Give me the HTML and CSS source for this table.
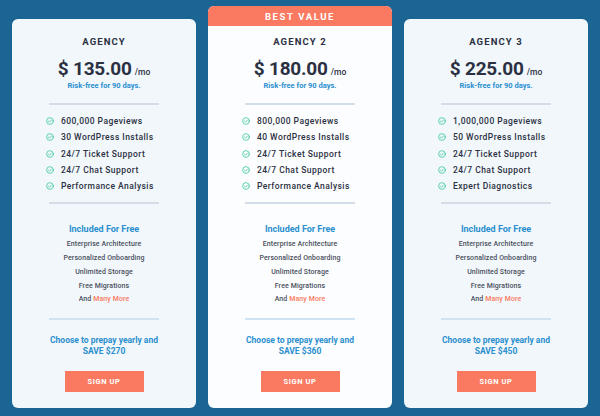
FILE: index.html
```html
<!DOCTYPE html>
<html lang="en">
  <head>
    <meta charset="UTF-8" />
    <title>Pricing</title>
    <link rel="stylesheet" href="styles.css">
  </head>
  <body>
    <div class="plans">
      <div class="card">
        <div class="cardBody">
          <div class="name">AGENCY</div>
          <div class="price">$ 135.00<span class="per">/mo</span></div>
          <div class="risk">Risk-free for 90 days.</div>
          <div class="line"></div>
          <ul class="features">
            <li><svg viewBox="0 0 10 10"><circle cx="5" cy="5" r="4.2"/><path d="M3 5.1l1.4 1.4 2.7-2.8"/></svg>600,000 Pageviews</li>
            <li><svg viewBox="0 0 10 10"><circle cx="5" cy="5" r="4.2"/><path d="M3 5.1l1.4 1.4 2.7-2.8"/></svg>30 WordPress Installs</li>
            <li><svg viewBox="0 0 10 10"><circle cx="5" cy="5" r="4.2"/><path d="M3 5.1l1.4 1.4 2.7-2.8"/></svg>24/7 Ticket Support</li>
            <li><svg viewBox="0 0 10 10"><circle cx="5" cy="5" r="4.2"/><path d="M3 5.1l1.4 1.4 2.7-2.8"/></svg>24/7 Chat Support</li>
            <li><svg viewBox="0 0 10 10"><circle cx="5" cy="5" r="4.2"/><path d="M3 5.1l1.4 1.4 2.7-2.8"/></svg>Performance Analysis</li>
          </ul>
          <div class="line"></div>
          <div class="freeTitle">Included For Free</div>
          <ul class="free">
            <li>Enterprise Architecture</li>
            <li>Personalized Onboarding</li>
            <li>Unlimited Storage</li>
            <li>Free Migrations</li>
            <li>And <span class="more">Many More</span></li>
          </ul>
          <div class="line blue"></div>
          <div class="prepay">Choose to prepay yearly and<br>SAVE $270</div>
          <button class="signup">SIGN UP</button>
        </div>
      </div>

      <div class="card featured">
        <div class="badge">BEST VALUE</div>
        <div class="cardBody">
          <div class="name">AGENCY 2</div>
          <div class="price">$ 180.00<span class="per">/mo</span></div>
          <div class="risk">Risk-free for 90 days.</div>
          <div class="line"></div>
          <ul class="features">
            <li><svg viewBox="0 0 10 10"><circle cx="5" cy="5" r="4.2"/><path d="M3 5.1l1.4 1.4 2.7-2.8"/></svg>800,000 Pageviews</li>
            <li><svg viewBox="0 0 10 10"><circle cx="5" cy="5" r="4.2"/><path d="M3 5.1l1.4 1.4 2.7-2.8"/></svg>40 WordPress Installs</li>
            <li><svg viewBox="0 0 10 10"><circle cx="5" cy="5" r="4.2"/><path d="M3 5.1l1.4 1.4 2.7-2.8"/></svg>24/7 Ticket Support</li>
            <li><svg viewBox="0 0 10 10"><circle cx="5" cy="5" r="4.2"/><path d="M3 5.1l1.4 1.4 2.7-2.8"/></svg>24/7 Chat Support</li>
            <li><svg viewBox="0 0 10 10"><circle cx="5" cy="5" r="4.2"/><path d="M3 5.1l1.4 1.4 2.7-2.8"/></svg>Performance Analysis</li>
          </ul>
          <div class="line"></div>
          <div class="freeTitle">Included For Free</div>
          <ul class="free">
            <li>Enterprise Architecture</li>
            <li>Personalized Onboarding</li>
            <li>Unlimited Storage</li>
            <li>Free Migrations</li>
            <li>And <span class="more">Many More</span></li>
          </ul>
          <div class="line blue"></div>
          <div class="prepay">Choose to prepay yearly and<br>SAVE $360</div>
          <button class="signup">SIGN UP</button>
        </div>
      </div>

      <div class="card">
        <div class="cardBody">
          <div class="name">AGENCY 3</div>
          <div class="price">$ 225.00<span class="per">/mo</span></div>
          <div class="risk">Risk-free for 90 days.</div>
          <div class="line"></div>
          <ul class="features">
            <li><svg viewBox="0 0 10 10"><circle cx="5" cy="5" r="4.2"/><path d="M3 5.1l1.4 1.4 2.7-2.8"/></svg>1,000,000 Pageviews</li>
            <li><svg viewBox="0 0 10 10"><circle cx="5" cy="5" r="4.2"/><path d="M3 5.1l1.4 1.4 2.7-2.8"/></svg>50 WordPress Installs</li>
            <li><svg viewBox="0 0 10 10"><circle cx="5" cy="5" r="4.2"/><path d="M3 5.1l1.4 1.4 2.7-2.8"/></svg>24/7 Ticket Support</li>
            <li><svg viewBox="0 0 10 10"><circle cx="5" cy="5" r="4.2"/><path d="M3 5.1l1.4 1.4 2.7-2.8"/></svg>24/7 Chat Support</li>
            <li><svg viewBox="0 0 10 10"><circle cx="5" cy="5" r="4.2"/><path d="M3 5.1l1.4 1.4 2.7-2.8"/></svg>Expert Diagnostics</li>
          </ul>
          <div class="line"></div>
          <div class="freeTitle">Included For Free</div>
          <ul class="free">
            <li>Enterprise Architecture</li>
            <li>Personalized Onboarding</li>
            <li>Unlimited Storage</li>
            <li>Free Migrations</li>
            <li>And <span class="more">Many More</span></li>
          </ul>
          <div class="line blue"></div>
          <div class="prepay">Choose to prepay yearly and<br>SAVE $450</div>
          <button class="signup">SIGN UP</button>
        </div>
      </div>
    </div>
  </body>
</html>
```

FILE: styles.css
```css
body {
  margin: 0;
  padding: 0;
  background: #1b6594;
  font-family: Roboto, "Liberation Sans", sans-serif;
  color: #2b3042;
}
ul {
  list-style: none;
  margin: 0;
  padding: 0;
}
.plans {
  display: flex;
  align-items: flex-end;
  gap: 12px;
  padding: 6px 12px 8px;
}
.card {
  width: 184px;
  background: #f1f7fb;
  border-radius: 6px;
}
.featured {
  background: #fbfdfe;
}
.badge {
  height: 20px;
  line-height: 21px;
  background: #fa7a61;
  color: #fff;
  border-radius: 6px 6px 0 0;
  text-align: center;
  font-size: 9.5px;
  font-weight: 700;
  letter-spacing: 1.6px;
}
.cardBody {
  display: flex;
  flex-direction: column;
  align-items: center;
  padding: 17px 0 16px;
}
.featured .cardBody {
  padding-top: 10px;
}
.name {
  height: 12px;
  line-height: 12px;
  font-size: 9.5px;
  font-weight: 700;
  letter-spacing: 1.1px;
}
.price {
  margin-top: 9px;
  height: 24px;
  line-height: 24px;
  font-size: 19px;
  font-weight: 700;
  letter-spacing: -0.2px;
}
.per {
  font-size: 8.5px;
  font-weight: 500;
  letter-spacing: 0;
  margin-left: 3px;
}
.risk {
  height: 10px;
  line-height: 10px;
  font-size: 7.5px;
  font-weight: 700;
  color: #2b8fcf;
}
.line {
  width: 110px;
  height: 2px;
  background: #d2dde8;
  margin-top: 12px;
}
.features {
  align-self: stretch;
  margin: 8px 0;
  padding-left: 34px;
}
.features li {
  display: flex;
  align-items: center;
  height: 16.25px;
  font-size: 8.5px;
  font-weight: 500;
  letter-spacing: 0.45px;
}
.features svg {
  width: 8px;
  height: 8px;
  margin-right: 7px;
  fill: none;
  stroke: #3cc9a0;
  stroke-width: 1;
  stroke-linecap: round;
  stroke-linejoin: round;
}
.features + .line {
  margin-top: 0;
}
.freeTitle {
  margin-top: 19px;
  height: 12px;
  line-height: 12px;
  font-size: 9px;
  font-weight: 700;
  color: #2b8fcf;
}
.free {
  margin-top: 3px;
  text-align: center;
}
.free li {
  height: 13.75px;
  line-height: 13.75px;
  font-size: 7px;
  font-weight: 500;
  letter-spacing: 0.1px;
  color: #4a4f5c;
}
.more {
  color: #fa7a61;
}
.line.blue {
  margin-top: 11px;
  background: #cfe3f2;
}
.prepay {
  margin-top: 15px;
  line-height: 11px;
  font-size: 8.5px;
  font-weight: 700;
  color: #2b8fcf;
  text-align: center;
}
.signup {
  margin-top: 14px;
  width: 79px;
  height: 21px;
  border: none;
  background: #fa7a61;
  color: #fff;
  font-family: Roboto, "Liberation Sans", sans-serif;
  font-size: 7.5px;
  font-weight: 700;
  letter-spacing: 0.6px;
  padding: 0;
}
```
